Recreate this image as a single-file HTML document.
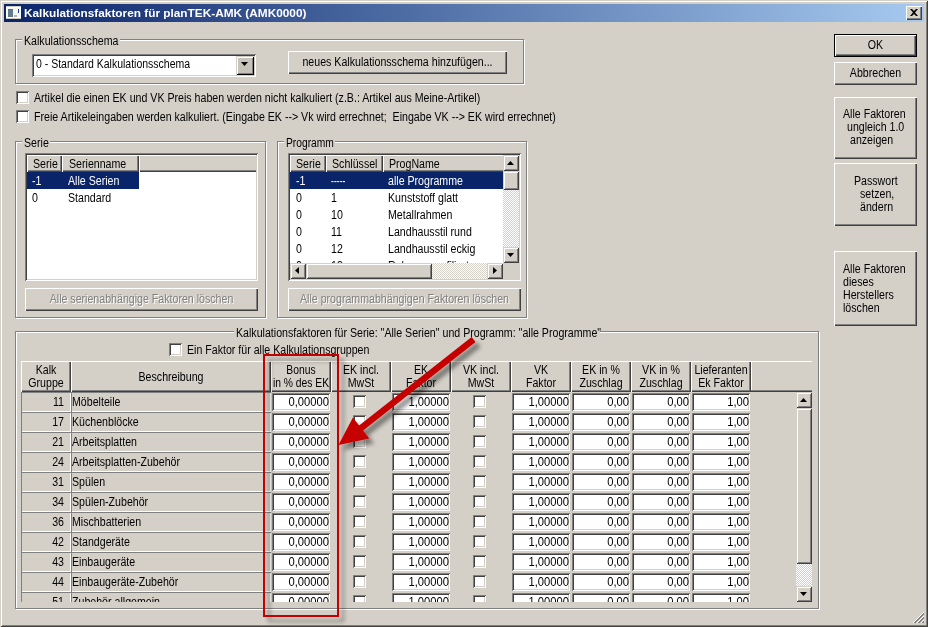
<!DOCTYPE html>
<html><head><meta charset="utf-8"><style>
*{box-sizing:border-box;margin:0;padding:0}
html,body{width:928px;height:627px;overflow:hidden;background:#d4d0c8}
body{font-family:"Liberation Sans",sans-serif;font-size:12px;color:#000;position:relative;line-height:14px}
#frame{position:absolute;left:0;top:0;width:928px;height:627px;background:#d4d0c8;
 box-shadow:inset 1px 1px 0 #d4d0c8,inset -1px -1px 0 #404040,inset 2px 2px 0 #fff,inset -2px -2px 0 #808080}
#title{position:absolute;left:4px;top:4px;width:920px;height:18px;background:linear-gradient(to right,#0a246a 0%,#a6caf0 100%)}
.b{position:absolute;background:#d4d0c8;
 box-shadow:inset 1px 1px 0 #fff,inset -1px -1px 0 #404040,inset -2px -2px 0 #808080}

.b2{position:absolute;background:#d4d0c8;box-shadow:inset 1px 1px 0 #d4d0c8,inset -1px -1px 0 #404040,inset 2px 2px 0 #fff,inset -2px -2px 0 #808080}
.dis{color:#808080;text-shadow:1px 1px 0 #fff}
.g{position:absolute;border:1px solid #808080;box-shadow:inset 1px 1px 0 #fff,1px 1px 0 #fff}
.lg{position:absolute;background:#d4d0c8;height:13px}
.s{position:absolute;background:#fff;box-shadow:inset 1px 1px 0 #808080,inset -1px -1px 0 #fff,inset 2px 2px 0 #404040,inset -2px -2px 0 #d4d0c8}
.c{position:absolute;width:13px;height:13px;background:#fff;box-shadow:inset 1px 1px 0 #808080,inset -1px -1px 0 #fff,inset 2px 2px 0 #404040,inset -2px -2px 0 #d4d0c8}
.t{position:absolute;white-space:pre;transform:scaleX(0.885);transform-origin:0 0}
.tc{position:absolute;white-space:pre;text-align:center;transform:scaleX(0.885);transform-origin:50% 0}
.tr{position:absolute;white-space:pre;text-align:right;transform:scaleX(0.885);transform-origin:100% 0}
.h{position:absolute;background:#d4d0c8;box-shadow:inset 1px 1px 0 #fff,inset -1px -1px 0 #404040,inset -2px -2px 0 #808080}
.k{position:absolute;background-color:#fff;background-image:conic-gradient(#d4d0c8 25%,#fff 0 50%,#d4d0c8 0 75%,#fff 0);background-size:2px 2px}
.w{color:#fff}
.sel{position:absolute;background:#0a246a}
.cell{position:absolute;background:#d4d0c8;box-shadow:inset 1px 1px 0 #808080,inset -1px -1px 0 #fff}
#clip{position:absolute;left:21px;top:392px;width:775px;height:210px;overflow:hidden}
</style></head><body>
<div id="frame"></div>
<div id="title"></div>
<svg style="position:absolute;left:6px;top:6px" width="15" height="13" viewBox="0 0 15 13" shape-rendering="crispEdges"><rect width="15" height="13" fill="#fff"/><rect width="15" height="1" fill="#d2cec4"/><rect y="12" width="15" height="1" fill="#cfcbc2"/><rect x="1" y="2" width="13" height="9" fill="#f3f6f3"/><rect x="2" y="3" width="5" height="8" fill="#607a8e"/><rect x="2" y="3" width="5" height="1" fill="#4a6cc0"/><rect x="12" y="3" width="1" height="4" fill="#1c3c9c"/><rect x="8" y="9" width="3" height="2" fill="#b4b4b4"/></svg>
<div class="t" style="left:24px;top:6px;color:#fff;font-weight:bold;font-size:11.5px;transform:scaleX(1.028)">Kalkulationsfaktoren für planTEK-AMK (AMK0000)</div>
<div class="b" style="left:906px;top:6px;width:16px;height:14px;"></div>
<svg style="position:absolute;left:910px;top:9px" width="8" height="7" viewBox="0 0 8 7"><path d="M0 0h2l2 2 2-2h2l-3 3.5 3 3.5h-2l-2-2-2 2h-2l3-3.5z" fill="#000"/></svg>
<div class="g" style="left:15px;top:39px;width:509px;height:45px;"></div>
<div class="lg" style="left:22px;top:33px;width:98px;height:13px;"></div>
<div class="t" style="left:24px;top:34px;">Kalkulationsschema</div>
<div class="s" style="left:32px;top:54px;width:224px;height:23px;"></div>
<div class="t" style="left:35.5px;top:57px;transform:scaleX(.875);">0 - Standard Kalkulationsschema</div>
<div class="b2" style="left:236px;top:56px;width:18px;height:19px;background:#c6c3bb;box-shadow:inset 1px 1px 0 #d4d0c8,inset -1px -1px 0 #000,inset 2px 2px 0 #fff,inset -2px -2px 0 #808080;"></div>
<svg style="position:absolute;left:241px;top:62px" width="7" height="4"><path d="M0 0h7l-3.5 4z"/></svg>
<div class="b" style="left:288px;top:51px;width:219px;height:23px;"></div>
<div class="tc" style="left:258px;top:55px;width:279px;">neues Kalkulationsschema hinzufügen...</div>
<div class="c" style="left:16px;top:91px;width:13px;height:13px;"></div>
<div class="t" style="left:34px;top:91px;">Artikel die einen EK und VK Preis haben werden nicht kalkuliert (z.B.: Artikel aus Meine-Artikel)</div>
<div class="c" style="left:16px;top:110px;width:13px;height:13px;"></div>
<div class="t" style="left:34px;top:110px;">Freie Artikeleingaben werden kalkuliert. (Eingabe EK --> Vk wird errechnet;  Eingabe VK --> EK wird errechnet)</div>
<div class="g" style="left:15px;top:141px;width:251px;height:177px;"></div>
<div class="lg" style="left:22px;top:135px;width:28px;height:13px;"></div>
<div class="t" style="left:24px;top:136px;">Serie</div>
<div class="s" style="left:25px;top:153px;width:233px;height:128px;"></div>
<div class="h" style="left:27px;top:155px;width:35px;height:17px;"></div>
<div class="t" style="left:33px;top:157px;">Serie</div>
<div class="h" style="left:62px;top:155px;width:77px;height:17px;"></div>
<div class="t" style="left:69px;top:157px;">Serienname</div>
<div style="position:absolute;left:139px;top:155px;width:117px;height:17px;overflow:hidden"><div class="h" style="left:0;top:0;width:130px;height:17px"></div></div>
<div class="sel" style="left:27px;top:172px;width:112px;height:17px;"></div>
<div class="t w" style="left:32px;top:174px;">-1</div>
<div class="t w" style="left:68px;top:174px;">Alle Serien</div>
<div class="t" style="left:32px;top:191px;">0</div>
<div class="t" style="left:68px;top:191px;">Standard</div>
<div class="b" style="left:25px;top:288px;width:233px;height:23px;"></div>
<div class="tc dis" style="left:-5px;top:292px;width:293px;">Alle serienabhängige Faktoren löschen</div>
<div class="g" style="left:277px;top:141px;width:250px;height:177px;"></div>
<div class="lg" style="left:284px;top:135px;width:51px;height:13px;"></div>
<div class="t" style="left:286px;top:136px;transform:scaleX(.855);">Programm</div>
<div class="s" style="left:288px;top:153px;width:233px;height:128px;"></div>
<div class="h" style="left:290px;top:155px;width:36px;height:17px;"></div>
<div class="t" style="left:296px;top:157px;">Serie</div>
<div class="h" style="left:326px;top:155px;width:57px;height:17px;"></div>
<div class="t" style="left:332px;top:157px;">Schlüssel</div>
<div class="h" style="left:383px;top:155px;width:130px;height:17px;"></div>
<div class="t" style="left:389px;top:157px;">ProgName</div>
<div style="position:absolute;left:290px;top:172px;width:213px;height:91px;overflow:hidden">
<div class="sel" style="left:0px;top:0px;width:213px;height:17px;"></div>
<div class="t w" style="left:6px;top:2px;">-1</div>
<div class="t w" style="left:41px;top:2px;transform:scaleX(.72);">-----</div>
<div class="t w" style="left:98px;top:2px;">alle Programme</div>
<div class="t" style="left:6px;top:19px;">0</div>
<div class="t" style="left:41px;top:19px;">1</div>
<div class="t" style="left:98px;top:19px;">Kunststoff glatt</div>
<div class="t" style="left:6px;top:36px;">0</div>
<div class="t" style="left:41px;top:36px;">10</div>
<div class="t" style="left:98px;top:36px;">Metallrahmen</div>
<div class="t" style="left:6px;top:53px;">0</div>
<div class="t" style="left:41px;top:53px;">11</div>
<div class="t" style="left:98px;top:53px;">Landhausstil rund</div>
<div class="t" style="left:6px;top:70px;">0</div>
<div class="t" style="left:41px;top:70px;">12</div>
<div class="t" style="left:98px;top:70px;">Landhausstil eckig</div>
<div class="t" style="left:6px;top:87px;">0</div>
<div class="t" style="left:41px;top:87px;">13</div>
<div class="t" style="left:98px;top:87px;">Rahmen profiliert</div>
</div>
<div class="k" style="left:503px;top:155px;width:16px;height:108px;"></div>
<div class="b2" style="left:503px;top:155px;width:16px;height:16px;"></div>
<svg style="position:absolute;left:507px;top:161px" width="7" height="4"><path d="M0 4h7l-3.5-4z"/></svg>
<div class="b2" style="left:503px;top:247px;width:16px;height:16px;"></div>
<svg style="position:absolute;left:507px;top:253px" width="7" height="4"><path d="M0 0h7l-3.5 4z"/></svg>
<div class="b2" style="left:503px;top:171px;width:16px;height:19px;"></div>
<div class="k" style="left:290px;top:263px;width:213px;height:16px;"></div>
<div class="b2" style="left:290px;top:263px;width:16px;height:16px;"></div>
<svg style="position:absolute;left:295px;top:267px" width="4" height="7"><path d="M4 0v7l-4-3.5z"/></svg>
<div class="b2" style="left:487px;top:263px;width:16px;height:16px;"></div>
<svg style="position:absolute;left:493px;top:267px" width="4" height="7"><path d="M0 0v7l4-3.5z"/></svg>
<div class="b2" style="left:306px;top:263px;width:126px;height:16px;"></div>
<div style="position:absolute;left:503px;top:263px;width:16px;height:16px;background:#d4d0c8"></div>
<div class="b" style="left:288px;top:288px;width:233px;height:23px;"></div>
<div class="tc dis" style="left:258px;top:292px;width:293px;">Alle programmabhängigen Faktoren löschen</div>
<div style="position:absolute;left:834px;top:34px;width:83px;height:23px;background:#000"></div>
<div class="b" style="left:835px;top:35px;width:81px;height:21px;"></div>
<div class="tc" style="left:805px;top:38px;width:141px;">OK</div>
<div class="b" style="left:834px;top:62px;width:83px;height:23px;"></div>
<div class="tc" style="left:804px;top:66px;width:143px;">Abbrechen</div>
<div class="b" style="left:834px;top:97px;width:83px;height:62px;"></div>
<div class="t" style="left:843px;top:107px;">Alle Faktoren</div>
<div class="t" style="left:847px;top:120px;">ungleich 1.0</div>
<div class="t" style="left:850px;top:133px;">anzeigen</div>
<div class="b" style="left:834px;top:163px;width:83px;height:63px;"></div>
<div class="t" style="left:854px;top:174px;">Passwort</div>
<div class="t" style="left:860px;top:187px;">setzen,</div>
<div class="t" style="left:860px;top:200px;">ändern</div>
<div class="b" style="left:834px;top:251px;width:83px;height:75px;"></div>
<div class="t" style="left:843px;top:263px;line-height:13px;">Alle Faktoren
dieses
Herstellers
löschen</div>
<div class="g" style="left:15px;top:331px;width:804px;height:278px;"></div>
<div class="lg" style="left:234px;top:325px;width:366px;height:13px;"></div>
<div class="t" style="left:236px;top:326px;">Kalkulationsfaktoren für Serie: "Alle Serien" und Programm: "alle Programme"</div>
<div class="c" style="left:169px;top:343px;width:13px;height:13px;"></div>
<div class="t" style="left:187px;top:343px;">Ein Faktor für alle Kalkulationsgruppen</div>
<div style="position:absolute;left:21px;top:390px;width:791px;height:2px;background:#404040;border-top:1px solid #808080"></div>
<div style="position:absolute;left:751px;top:361px;width:61px;height:29px;border-top:1px solid #fff;border-left:1px solid #fff"></div>
<div class="b" style="left:21px;top:361px;width:50px;height:31px;"></div>
<div class="tc" style="left:-9px;top:364px;width:110px;line-height:13px;">Kalk
Gruppe</div>
<div class="b" style="left:71px;top:361px;width:200px;height:31px;"></div>
<div class="tc" style="left:41px;top:371px;width:260px;line-height:13px;">Beschreibung</div>
<div class="b" style="left:271px;top:361px;width:60px;height:31px;"></div>
<div class="tc" style="left:241px;top:364px;width:120px;line-height:13px;transform:scaleX(.86);">Bonus
in % des EK</div>
<div class="b" style="left:331px;top:361px;width:60px;height:31px;"></div>
<div class="tc" style="left:301px;top:364px;width:120px;line-height:13px;">EK incl.
MwSt</div>
<div class="b" style="left:391px;top:361px;width:60px;height:31px;"></div>
<div class="tc" style="left:361px;top:364px;width:120px;line-height:13px;">EK
Faktor</div>
<div class="b" style="left:451px;top:361px;width:60px;height:31px;"></div>
<div class="tc" style="left:421px;top:364px;width:120px;line-height:13px;">VK incl.
MwSt</div>
<div class="b" style="left:511px;top:361px;width:60px;height:31px;"></div>
<div class="tc" style="left:481px;top:364px;width:120px;line-height:13px;">VK
Faktor</div>
<div class="b" style="left:571px;top:361px;width:60px;height:31px;"></div>
<div class="tc" style="left:541px;top:364px;width:120px;line-height:13px;">EK in %
Zuschlag</div>
<div class="b" style="left:631px;top:361px;width:60px;height:31px;"></div>
<div class="tc" style="left:601px;top:364px;width:120px;line-height:13px;">VK in %
Zuschlag</div>
<div class="b" style="left:691px;top:361px;width:60px;height:31px;"></div>
<div class="tc" style="left:661px;top:364px;width:120px;line-height:13px;">Lieferanten
Ek Faktor</div>
<div id="clip">
<div class="cell" style="left:0px;top:0px;width:50px;height:20px;"></div>
<div class="tr" style="left:0px;top:3px;width:43px;">11</div>
<div class="cell" style="left:50px;top:0px;width:200px;height:20px;"></div>
<div class="t" style="left:51px;top:3px;">Möbelteile</div>
<div class="s" style="left:251px;top:1px;width:58px;height:18px;"></div>
<div class="tr" style="left:251px;top:3px;width:57px;transform:scaleX(.933);">0,00000</div>
<div class="c" style="left:332px;top:3px;width:13px;height:13px;"></div>
<div class="s" style="left:371px;top:1px;width:58px;height:18px;"></div>
<div class="tr" style="left:371px;top:3px;width:57px;transform:scaleX(.933);">1,00000</div>
<div class="c" style="left:452px;top:3px;width:13px;height:13px;"></div>
<div class="s" style="left:491px;top:1px;width:58px;height:18px;"></div>
<div class="tr" style="left:491px;top:3px;width:57px;transform:scaleX(.933);">1,00000</div>
<div class="s" style="left:551px;top:1px;width:58px;height:18px;"></div>
<div class="tr" style="left:551px;top:3px;width:57px;transform:scaleX(.933);">0,00</div>
<div class="s" style="left:611px;top:1px;width:58px;height:18px;"></div>
<div class="tr" style="left:611px;top:3px;width:57px;transform:scaleX(.933);">0,00</div>
<div class="s" style="left:671px;top:1px;width:58px;height:18px;"></div>
<div class="tr" style="left:671px;top:3px;width:57px;transform:scaleX(.933);">1,00</div>
<div class="cell" style="left:0px;top:20px;width:50px;height:20px;"></div>
<div class="tr" style="left:0px;top:23px;width:43px;">17</div>
<div class="cell" style="left:50px;top:20px;width:200px;height:20px;"></div>
<div class="t" style="left:51px;top:23px;">Küchenblöcke</div>
<div class="s" style="left:251px;top:21px;width:58px;height:18px;"></div>
<div class="tr" style="left:251px;top:23px;width:57px;transform:scaleX(.933);">0,00000</div>
<div class="c" style="left:332px;top:23px;width:13px;height:13px;"></div>
<div class="s" style="left:371px;top:21px;width:58px;height:18px;"></div>
<div class="tr" style="left:371px;top:23px;width:57px;transform:scaleX(.933);">1,00000</div>
<div class="c" style="left:452px;top:23px;width:13px;height:13px;"></div>
<div class="s" style="left:491px;top:21px;width:58px;height:18px;"></div>
<div class="tr" style="left:491px;top:23px;width:57px;transform:scaleX(.933);">1,00000</div>
<div class="s" style="left:551px;top:21px;width:58px;height:18px;"></div>
<div class="tr" style="left:551px;top:23px;width:57px;transform:scaleX(.933);">0,00</div>
<div class="s" style="left:611px;top:21px;width:58px;height:18px;"></div>
<div class="tr" style="left:611px;top:23px;width:57px;transform:scaleX(.933);">0,00</div>
<div class="s" style="left:671px;top:21px;width:58px;height:18px;"></div>
<div class="tr" style="left:671px;top:23px;width:57px;transform:scaleX(.933);">1,00</div>
<div class="cell" style="left:0px;top:40px;width:50px;height:20px;"></div>
<div class="tr" style="left:0px;top:43px;width:43px;">21</div>
<div class="cell" style="left:50px;top:40px;width:200px;height:20px;"></div>
<div class="t" style="left:51px;top:43px;">Arbeitsplatten</div>
<div class="s" style="left:251px;top:41px;width:58px;height:18px;"></div>
<div class="tr" style="left:251px;top:43px;width:57px;transform:scaleX(.933);">0,00000</div>
<div class="c" style="left:332px;top:43px;width:13px;height:13px;"></div>
<div class="s" style="left:371px;top:41px;width:58px;height:18px;"></div>
<div class="tr" style="left:371px;top:43px;width:57px;transform:scaleX(.933);">1,00000</div>
<div class="c" style="left:452px;top:43px;width:13px;height:13px;"></div>
<div class="s" style="left:491px;top:41px;width:58px;height:18px;"></div>
<div class="tr" style="left:491px;top:43px;width:57px;transform:scaleX(.933);">1,00000</div>
<div class="s" style="left:551px;top:41px;width:58px;height:18px;"></div>
<div class="tr" style="left:551px;top:43px;width:57px;transform:scaleX(.933);">0,00</div>
<div class="s" style="left:611px;top:41px;width:58px;height:18px;"></div>
<div class="tr" style="left:611px;top:43px;width:57px;transform:scaleX(.933);">0,00</div>
<div class="s" style="left:671px;top:41px;width:58px;height:18px;"></div>
<div class="tr" style="left:671px;top:43px;width:57px;transform:scaleX(.933);">1,00</div>
<div class="cell" style="left:0px;top:60px;width:50px;height:20px;"></div>
<div class="tr" style="left:0px;top:63px;width:43px;">24</div>
<div class="cell" style="left:50px;top:60px;width:200px;height:20px;"></div>
<div class="t" style="left:51px;top:63px;">Arbeitsplatten-Zubehör</div>
<div class="s" style="left:251px;top:61px;width:58px;height:18px;"></div>
<div class="tr" style="left:251px;top:63px;width:57px;transform:scaleX(.933);">0,00000</div>
<div class="c" style="left:332px;top:63px;width:13px;height:13px;"></div>
<div class="s" style="left:371px;top:61px;width:58px;height:18px;"></div>
<div class="tr" style="left:371px;top:63px;width:57px;transform:scaleX(.933);">1,00000</div>
<div class="c" style="left:452px;top:63px;width:13px;height:13px;"></div>
<div class="s" style="left:491px;top:61px;width:58px;height:18px;"></div>
<div class="tr" style="left:491px;top:63px;width:57px;transform:scaleX(.933);">1,00000</div>
<div class="s" style="left:551px;top:61px;width:58px;height:18px;"></div>
<div class="tr" style="left:551px;top:63px;width:57px;transform:scaleX(.933);">0,00</div>
<div class="s" style="left:611px;top:61px;width:58px;height:18px;"></div>
<div class="tr" style="left:611px;top:63px;width:57px;transform:scaleX(.933);">0,00</div>
<div class="s" style="left:671px;top:61px;width:58px;height:18px;"></div>
<div class="tr" style="left:671px;top:63px;width:57px;transform:scaleX(.933);">1,00</div>
<div class="cell" style="left:0px;top:80px;width:50px;height:20px;"></div>
<div class="tr" style="left:0px;top:83px;width:43px;">31</div>
<div class="cell" style="left:50px;top:80px;width:200px;height:20px;"></div>
<div class="t" style="left:51px;top:83px;">Spülen</div>
<div class="s" style="left:251px;top:81px;width:58px;height:18px;"></div>
<div class="tr" style="left:251px;top:83px;width:57px;transform:scaleX(.933);">0,00000</div>
<div class="c" style="left:332px;top:83px;width:13px;height:13px;"></div>
<div class="s" style="left:371px;top:81px;width:58px;height:18px;"></div>
<div class="tr" style="left:371px;top:83px;width:57px;transform:scaleX(.933);">1,00000</div>
<div class="c" style="left:452px;top:83px;width:13px;height:13px;"></div>
<div class="s" style="left:491px;top:81px;width:58px;height:18px;"></div>
<div class="tr" style="left:491px;top:83px;width:57px;transform:scaleX(.933);">1,00000</div>
<div class="s" style="left:551px;top:81px;width:58px;height:18px;"></div>
<div class="tr" style="left:551px;top:83px;width:57px;transform:scaleX(.933);">0,00</div>
<div class="s" style="left:611px;top:81px;width:58px;height:18px;"></div>
<div class="tr" style="left:611px;top:83px;width:57px;transform:scaleX(.933);">0,00</div>
<div class="s" style="left:671px;top:81px;width:58px;height:18px;"></div>
<div class="tr" style="left:671px;top:83px;width:57px;transform:scaleX(.933);">1,00</div>
<div class="cell" style="left:0px;top:100px;width:50px;height:20px;"></div>
<div class="tr" style="left:0px;top:103px;width:43px;">34</div>
<div class="cell" style="left:50px;top:100px;width:200px;height:20px;"></div>
<div class="t" style="left:51px;top:103px;">Spülen-Zubehör</div>
<div class="s" style="left:251px;top:101px;width:58px;height:18px;"></div>
<div class="tr" style="left:251px;top:103px;width:57px;transform:scaleX(.933);">0,00000</div>
<div class="c" style="left:332px;top:103px;width:13px;height:13px;"></div>
<div class="s" style="left:371px;top:101px;width:58px;height:18px;"></div>
<div class="tr" style="left:371px;top:103px;width:57px;transform:scaleX(.933);">1,00000</div>
<div class="c" style="left:452px;top:103px;width:13px;height:13px;"></div>
<div class="s" style="left:491px;top:101px;width:58px;height:18px;"></div>
<div class="tr" style="left:491px;top:103px;width:57px;transform:scaleX(.933);">1,00000</div>
<div class="s" style="left:551px;top:101px;width:58px;height:18px;"></div>
<div class="tr" style="left:551px;top:103px;width:57px;transform:scaleX(.933);">0,00</div>
<div class="s" style="left:611px;top:101px;width:58px;height:18px;"></div>
<div class="tr" style="left:611px;top:103px;width:57px;transform:scaleX(.933);">0,00</div>
<div class="s" style="left:671px;top:101px;width:58px;height:18px;"></div>
<div class="tr" style="left:671px;top:103px;width:57px;transform:scaleX(.933);">1,00</div>
<div class="cell" style="left:0px;top:120px;width:50px;height:20px;"></div>
<div class="tr" style="left:0px;top:123px;width:43px;">36</div>
<div class="cell" style="left:50px;top:120px;width:200px;height:20px;"></div>
<div class="t" style="left:51px;top:123px;">Mischbatterien</div>
<div class="s" style="left:251px;top:121px;width:58px;height:18px;"></div>
<div class="tr" style="left:251px;top:123px;width:57px;transform:scaleX(.933);">0,00000</div>
<div class="c" style="left:332px;top:123px;width:13px;height:13px;"></div>
<div class="s" style="left:371px;top:121px;width:58px;height:18px;"></div>
<div class="tr" style="left:371px;top:123px;width:57px;transform:scaleX(.933);">1,00000</div>
<div class="c" style="left:452px;top:123px;width:13px;height:13px;"></div>
<div class="s" style="left:491px;top:121px;width:58px;height:18px;"></div>
<div class="tr" style="left:491px;top:123px;width:57px;transform:scaleX(.933);">1,00000</div>
<div class="s" style="left:551px;top:121px;width:58px;height:18px;"></div>
<div class="tr" style="left:551px;top:123px;width:57px;transform:scaleX(.933);">0,00</div>
<div class="s" style="left:611px;top:121px;width:58px;height:18px;"></div>
<div class="tr" style="left:611px;top:123px;width:57px;transform:scaleX(.933);">0,00</div>
<div class="s" style="left:671px;top:121px;width:58px;height:18px;"></div>
<div class="tr" style="left:671px;top:123px;width:57px;transform:scaleX(.933);">1,00</div>
<div class="cell" style="left:0px;top:140px;width:50px;height:20px;"></div>
<div class="tr" style="left:0px;top:143px;width:43px;">42</div>
<div class="cell" style="left:50px;top:140px;width:200px;height:20px;"></div>
<div class="t" style="left:51px;top:143px;">Standgeräte</div>
<div class="s" style="left:251px;top:141px;width:58px;height:18px;"></div>
<div class="tr" style="left:251px;top:143px;width:57px;transform:scaleX(.933);">0,00000</div>
<div class="c" style="left:332px;top:143px;width:13px;height:13px;"></div>
<div class="s" style="left:371px;top:141px;width:58px;height:18px;"></div>
<div class="tr" style="left:371px;top:143px;width:57px;transform:scaleX(.933);">1,00000</div>
<div class="c" style="left:452px;top:143px;width:13px;height:13px;"></div>
<div class="s" style="left:491px;top:141px;width:58px;height:18px;"></div>
<div class="tr" style="left:491px;top:143px;width:57px;transform:scaleX(.933);">1,00000</div>
<div class="s" style="left:551px;top:141px;width:58px;height:18px;"></div>
<div class="tr" style="left:551px;top:143px;width:57px;transform:scaleX(.933);">0,00</div>
<div class="s" style="left:611px;top:141px;width:58px;height:18px;"></div>
<div class="tr" style="left:611px;top:143px;width:57px;transform:scaleX(.933);">0,00</div>
<div class="s" style="left:671px;top:141px;width:58px;height:18px;"></div>
<div class="tr" style="left:671px;top:143px;width:57px;transform:scaleX(.933);">1,00</div>
<div class="cell" style="left:0px;top:160px;width:50px;height:20px;"></div>
<div class="tr" style="left:0px;top:163px;width:43px;">43</div>
<div class="cell" style="left:50px;top:160px;width:200px;height:20px;"></div>
<div class="t" style="left:51px;top:163px;">Einbaugeräte</div>
<div class="s" style="left:251px;top:161px;width:58px;height:18px;"></div>
<div class="tr" style="left:251px;top:163px;width:57px;transform:scaleX(.933);">0,00000</div>
<div class="c" style="left:332px;top:163px;width:13px;height:13px;"></div>
<div class="s" style="left:371px;top:161px;width:58px;height:18px;"></div>
<div class="tr" style="left:371px;top:163px;width:57px;transform:scaleX(.933);">1,00000</div>
<div class="c" style="left:452px;top:163px;width:13px;height:13px;"></div>
<div class="s" style="left:491px;top:161px;width:58px;height:18px;"></div>
<div class="tr" style="left:491px;top:163px;width:57px;transform:scaleX(.933);">1,00000</div>
<div class="s" style="left:551px;top:161px;width:58px;height:18px;"></div>
<div class="tr" style="left:551px;top:163px;width:57px;transform:scaleX(.933);">0,00</div>
<div class="s" style="left:611px;top:161px;width:58px;height:18px;"></div>
<div class="tr" style="left:611px;top:163px;width:57px;transform:scaleX(.933);">0,00</div>
<div class="s" style="left:671px;top:161px;width:58px;height:18px;"></div>
<div class="tr" style="left:671px;top:163px;width:57px;transform:scaleX(.933);">1,00</div>
<div class="cell" style="left:0px;top:180px;width:50px;height:20px;"></div>
<div class="tr" style="left:0px;top:183px;width:43px;">44</div>
<div class="cell" style="left:50px;top:180px;width:200px;height:20px;"></div>
<div class="t" style="left:51px;top:183px;">Einbaugeräte-Zubehör</div>
<div class="s" style="left:251px;top:181px;width:58px;height:18px;"></div>
<div class="tr" style="left:251px;top:183px;width:57px;transform:scaleX(.933);">0,00000</div>
<div class="c" style="left:332px;top:183px;width:13px;height:13px;"></div>
<div class="s" style="left:371px;top:181px;width:58px;height:18px;"></div>
<div class="tr" style="left:371px;top:183px;width:57px;transform:scaleX(.933);">1,00000</div>
<div class="c" style="left:452px;top:183px;width:13px;height:13px;"></div>
<div class="s" style="left:491px;top:181px;width:58px;height:18px;"></div>
<div class="tr" style="left:491px;top:183px;width:57px;transform:scaleX(.933);">1,00000</div>
<div class="s" style="left:551px;top:181px;width:58px;height:18px;"></div>
<div class="tr" style="left:551px;top:183px;width:57px;transform:scaleX(.933);">0,00</div>
<div class="s" style="left:611px;top:181px;width:58px;height:18px;"></div>
<div class="tr" style="left:611px;top:183px;width:57px;transform:scaleX(.933);">0,00</div>
<div class="s" style="left:671px;top:181px;width:58px;height:18px;"></div>
<div class="tr" style="left:671px;top:183px;width:57px;transform:scaleX(.933);">1,00</div>
<div class="cell" style="left:0px;top:200px;width:50px;height:20px;"></div>
<div class="tr" style="left:0px;top:203px;width:43px;">51</div>
<div class="cell" style="left:50px;top:200px;width:200px;height:20px;"></div>
<div class="t" style="left:51px;top:203px;">Zubehör allgemein</div>
<div class="s" style="left:251px;top:201px;width:58px;height:18px;"></div>
<div class="tr" style="left:251px;top:203px;width:57px;transform:scaleX(.933);">0,00000</div>
<div class="c" style="left:332px;top:203px;width:13px;height:13px;"></div>
<div class="s" style="left:371px;top:201px;width:58px;height:18px;"></div>
<div class="tr" style="left:371px;top:203px;width:57px;transform:scaleX(.933);">1,00000</div>
<div class="c" style="left:452px;top:203px;width:13px;height:13px;"></div>
<div class="s" style="left:491px;top:201px;width:58px;height:18px;"></div>
<div class="tr" style="left:491px;top:203px;width:57px;transform:scaleX(.933);">1,00000</div>
<div class="s" style="left:551px;top:201px;width:58px;height:18px;"></div>
<div class="tr" style="left:551px;top:203px;width:57px;transform:scaleX(.933);">0,00</div>
<div class="s" style="left:611px;top:201px;width:58px;height:18px;"></div>
<div class="tr" style="left:611px;top:203px;width:57px;transform:scaleX(.933);">0,00</div>
<div class="s" style="left:671px;top:201px;width:58px;height:18px;"></div>
<div class="tr" style="left:671px;top:203px;width:57px;transform:scaleX(.933);">1,00</div>
</div>
<div class="k" style="left:796px;top:392px;width:16px;height:210px;"></div>
<div class="b2" style="left:796px;top:392px;width:16px;height:16px;"></div>
<svg style="position:absolute;left:800px;top:398px" width="7" height="4"><path d="M0 4h7l-3.5-4z"/></svg>
<div class="b2" style="left:796px;top:586px;width:16px;height:16px;"></div>
<svg style="position:absolute;left:800px;top:592px" width="7" height="4"><path d="M0 0h7l-3.5 4z"/></svg>
<div class="b2" style="left:796px;top:408px;width:16px;height:156px;"></div>
<svg style="position:absolute;left:912px;top:611px" width="13" height="13" viewBox="0 0 13 13"><g stroke-width="1"><path d="M12 1L1 12M12 5L5 12M12 9L9 12" stroke="#fff"/><path d="M12 2L2 12M12 3L3 12M12 6L6 12M12 7L7 12M12 10L10 12M12 11L11 12" stroke="#808080"/></g></svg>
<svg style="position:absolute;left:0;top:0;pointer-events:none" width="928" height="627"><defs><filter id="sh" x="-10%" y="-10%" width="130%" height="130%"><feGaussianBlur in="SourceAlpha" stdDeviation="2"/><feOffset dx="5" dy="5"/><feComponentTransfer><feFuncA type="linear" slope="0.42"/></feComponentTransfer><feMerge><feMergeNode/><feMergeNode in="SourceGraphic"/></feMerge></filter></defs><g filter="url(#sh)"><rect x="264" y="355" width="74" height="261" fill="none" stroke="#c60000" stroke-width="2"/><path d="M471.6 336.9 L475.6 341.9 L363.1 430.6 L369.3 438.6 L338.5 445 L352.9 417.6 L359.1 425.6 Z" fill="#c60000"/></g></svg>
</body></html>
